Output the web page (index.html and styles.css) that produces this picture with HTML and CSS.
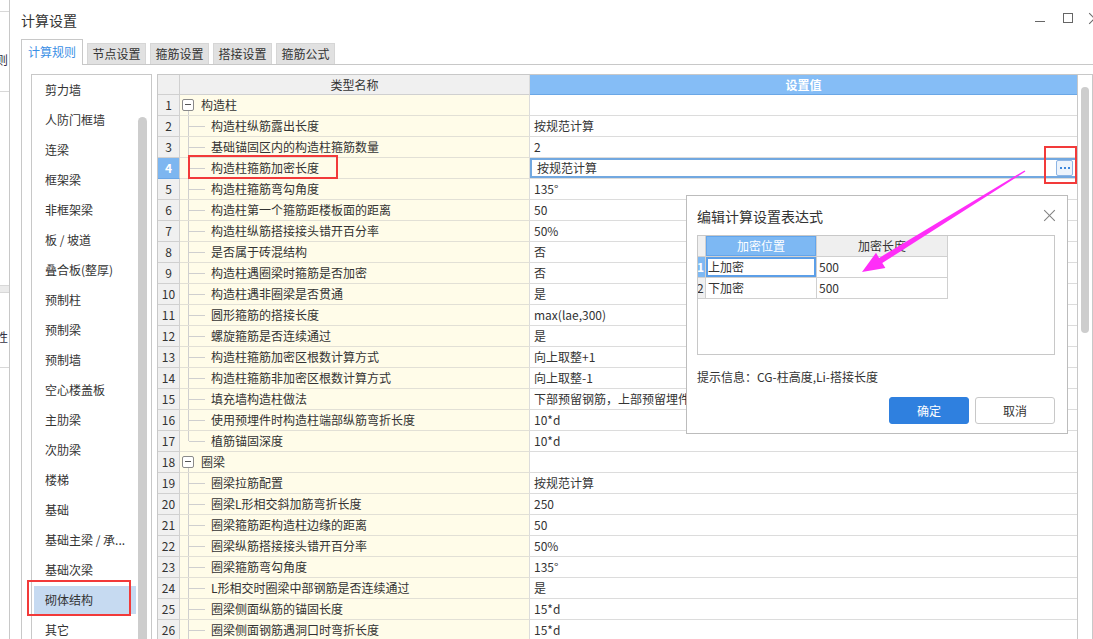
FILE: index.html
```html
<!DOCTYPE html>
<html lang="zh">
<head>
<meta charset="utf-8">
<title>计算设置</title>
<link rel="stylesheet" href="styles.css">
</head>
<body>
<div class="desk">
  <div class="behind">
    <div class="bk bk1"></div>
    <div class="bk bk2"><span class="clip">则</span></div>
    <div class="bk bk3"></div>
    <div class="bk bk4"></div>
    <div class="bk bk5"><span class="clip">性</span></div>
  </div>
  <div class="win">
    <div class="titlebar">
      <span class="title">计算设置</span>
      <div class="ctrls">
        <span class="ctl-min"></span>
        <span class="ctl-max"></span>
        <span class="ctl-close"></span>
      </div>
    </div>
    <div class="tabs">
      <div class="tab active">计算规则</div>
      <div class="tab">节点设置</div>
      <div class="tab">箍筋设置</div>
      <div class="tab">搭接设置</div>
      <div class="tab">箍筋公式</div>
    </div>
    <div class="pane">
      <div class="list">
        <div class="items">
          <div class="item">剪力墙</div>
          <div class="item">人防门框墙</div>
          <div class="item">连梁</div>
          <div class="item">框架梁</div>
          <div class="item">非框架梁</div>
          <div class="item">板 / 坡道</div>
          <div class="item">叠合板(整厚)</div>
          <div class="item">预制柱</div>
          <div class="item">预制梁</div>
          <div class="item">预制墙</div>
          <div class="item">空心楼盖板</div>
          <div class="item">主肋梁</div>
          <div class="item">次肋梁</div>
          <div class="item">楼梯</div>
          <div class="item">基础</div>
          <div class="item">基础主梁 / 承...</div>
          <div class="item">基础次梁</div>
          <div class="item selected">砌体结构</div>
          <div class="item">其它</div>
        </div>
        <div class="sb"><div class="sb-thumb"></div></div>
      </div>
      <div class="grid">
        <div class="tbl">
          <div class="hdr">
            <div class="c-num"></div>
            <div class="c-name">类型名称</div>
            <div class="c-val">设置值</div>
          </div>
          <div class="row"><div class="c-num">1</div><div class="c-name grp"><span class="tbox"></span>构造柱</div><div class="c-val"></div></div>
          <div class="row"><div class="c-num">2</div><div class="c-name"><span class="tree"></span>构造柱纵筋露出长度</div><div class="c-val">按规范计算</div></div>
          <div class="row"><div class="c-num">3</div><div class="c-name"><span class="tree"></span>基础锚固区内的构造柱箍筋数量</div><div class="c-val">2</div></div>
          <div class="row sel"><div class="c-num">4</div><div class="c-name"><span class="tree"></span>构造柱箍筋加密长度</div><div class="c-val"><span>按规范计算</span><span class="dots"><i></i><i></i><i></i></span></div></div>
          <div class="row"><div class="c-num">5</div><div class="c-name"><span class="tree"></span>构造柱箍筋弯勾角度</div><div class="c-val">135°</div></div>
          <div class="row"><div class="c-num">6</div><div class="c-name"><span class="tree"></span>构造柱第一个箍筋距楼板面的距离</div><div class="c-val">50</div></div>
          <div class="row"><div class="c-num">7</div><div class="c-name"><span class="tree"></span>构造柱纵筋搭接接头错开百分率</div><div class="c-val">50%</div></div>
          <div class="row"><div class="c-num">8</div><div class="c-name"><span class="tree"></span>是否属于砖混结构</div><div class="c-val">否</div></div>
          <div class="row"><div class="c-num">9</div><div class="c-name"><span class="tree"></span>构造柱遇圈梁时箍筋是否加密</div><div class="c-val">否</div></div>
          <div class="row"><div class="c-num">10</div><div class="c-name"><span class="tree"></span>构造柱遇非圈梁是否贯通</div><div class="c-val">是</div></div>
          <div class="row"><div class="c-num">11</div><div class="c-name"><span class="tree"></span>圆形箍筋的搭接长度</div><div class="c-val">max(lae,300)</div></div>
          <div class="row"><div class="c-num">12</div><div class="c-name"><span class="tree"></span>螺旋箍筋是否连续通过</div><div class="c-val">是</div></div>
          <div class="row"><div class="c-num">13</div><div class="c-name"><span class="tree"></span>构造柱箍筋加密区根数计算方式</div><div class="c-val">向上取整+1</div></div>
          <div class="row"><div class="c-num">14</div><div class="c-name"><span class="tree"></span>构造柱箍筋非加密区根数计算方式</div><div class="c-val">向上取整-1</div></div>
          <div class="row"><div class="c-num">15</div><div class="c-name"><span class="tree"></span>填充墙构造柱做法</div><div class="c-val">下部预留钢筋，上部预留埋件</div></div>
          <div class="row"><div class="c-num">16</div><div class="c-name"><span class="tree"></span>使用预埋件时构造柱端部纵筋弯折长度</div><div class="c-val">10*d</div></div>
          <div class="row"><div class="c-num">17</div><div class="c-name"><span class="tree last"></span>植筋锚固深度</div><div class="c-val">10*d</div></div>
          <div class="row"><div class="c-num">18</div><div class="c-name grp"><span class="tbox"></span>圈梁</div><div class="c-val"></div></div>
          <div class="row"><div class="c-num">19</div><div class="c-name"><span class="tree"></span>圈梁拉筋配置</div><div class="c-val">按规范计算</div></div>
          <div class="row"><div class="c-num">20</div><div class="c-name"><span class="tree"></span>圈梁L形相交斜加筋弯折长度</div><div class="c-val">250</div></div>
          <div class="row"><div class="c-num">21</div><div class="c-name"><span class="tree"></span>圈梁箍筋距构造柱边缘的距离</div><div class="c-val">50</div></div>
          <div class="row"><div class="c-num">22</div><div class="c-name"><span class="tree"></span>圈梁纵筋搭接接头错开百分率</div><div class="c-val">50%</div></div>
          <div class="row"><div class="c-num">23</div><div class="c-name"><span class="tree"></span>圈梁箍筋弯勾角度</div><div class="c-val">135°</div></div>
          <div class="row"><div class="c-num">24</div><div class="c-name"><span class="tree"></span>L形相交时圈梁中部钢筋是否连续通过</div><div class="c-val">是</div></div>
          <div class="row"><div class="c-num">25</div><div class="c-name"><span class="tree"></span>圈梁侧面纵筋的锚固长度</div><div class="c-val">15*d</div></div>
          <div class="row"><div class="c-num">26</div><div class="c-name"><span class="tree"></span>圈梁侧面钢筋遇洞口时弯折长度</div><div class="c-val">15*d</div></div>
        </div>
        <div class="vs"><div class="vs-thumb"></div></div>
      </div>
    </div>
  </div>
</div>

<div class="dlg">
  <div class="dlg-head"><span>编辑计算设置表达式</span><span class="dlg-x"></span></div>
  <div class="mini">
    <div class="m-row m-hdr"><div class="m-num"></div><div class="m-c1 m-act">加密位置</div><div class="m-c2">加密长度</div></div>
    <div class="m-row"><div class="m-num m-numsel">1</div><div class="m-c1 m-sel">上加密</div><div class="m-c2">500</div></div>
    <div class="m-row"><div class="m-num">2</div><div class="m-c1">下加密</div><div class="m-c2">500</div></div>
  </div>
  <div class="hint">提示信息：CG-柱高度,Li-搭接长度</div>
  <div class="btns"><span class="btn pri">确定</span><span class="btn">取消</span></div>
</div>

<div class="mark mk-row"></div>
<div class="mark mk-btn"></div>
<div class="mark mk-list"></div>

<svg class="arrow" width="1093" height="639" viewBox="0 0 1093 639">
  <polygon points="1024.6,170.4 1025.4,171.6 882.3,263.0 885.4,268.0 862,272 876.0,252.8 879.1,257.9" fill="#ff2ef8"/>
</svg>
</body>
</html>
```

FILE: styles.css
```css
* { box-sizing: border-box; margin: 0; padding: 0; }
html, body { width: 1093px; height: 639px; overflow: hidden; background: #fff; }
body {
  font-family: "Noto Sans CJK SC", "Microsoft YaHei", sans-serif;
  font-size: 12px;
  color: #333;
  position: relative;
}

.desk { display: flex; height: 639px; }

/* window behind */
.behind { width: 10px; flex: none; border-right: 1px solid #c8c8c8; overflow: hidden; }
.bk { border-bottom: 1px solid #d8d8d8; white-space: nowrap; }
.bk1 { height: 12px; }
.bk2 { height: 80px; padding-top: 40px; line-height: 16px; }
.bk3 { height: 194px; }
.bk4 { height: 7px; background: #ebebeb; }
.bk5 { height: 75px; padding-top: 36px; line-height: 16px; }
.clip { display: inline-block; margin-left: -4px; color: #334; }

/* main window */
.win { flex: 1; min-width: 0; display: flex; flex-direction: column; }
.titlebar { height: 39px; flex: none; display: flex; align-items: center; padding-left: 11px; }
.title { font-size: 14px; color: #333; }
.ctrls { margin-left: auto; margin-right: -7px; display: flex; align-items: center; }
.ctl-min { width: 10px; height: 1px; background: #666; margin-top: 3px; margin-right: 18px; }
.ctl-max { width: 10px; height: 10px; border: 1px solid #666; margin-top: -3px; margin-right: 16px; }
.ctl-close { width: 11px; height: 11px; position: relative; margin-top: -2px; }
.ctl-close::before, .ctl-close::after {
  content: ""; position: absolute; left: -2px; top: 5px; width: 15px; height: 1px;
  background: #666; transform: rotate(45deg);
}
.ctl-close::after { transform: rotate(-45deg); }

.tabs { height: 25px; flex: none; display: flex; align-items: flex-end; margin-left: 11px; position: relative; z-index: 1; }
.tab {
  width: 59px; height: 21px; margin-left: 4px;
  background: #e1e1e1; border: 1px solid #d6d6d6; border-bottom: none;
  text-align: center; line-height: 20px; color: #333;
}
.tab.active {
  width: 62px; height: 26px; margin-left: 0; margin-bottom: -1px;
  background: #fff; border-color: #c8c8c8; color: #3b8fe5; line-height: 24px;
}

.pane {
  flex: 1; min-height: 0; overflow: hidden;
  margin-left: 11px; border-top: 1px solid #c8c8c8; border-left: 1px solid #c8c8c8;
  padding: 9px 0 0 9px; display: flex; align-items: flex-start; gap: 5px;
}

/* left list */
.list { width: 121px; height: 640px; flex: none; border: 1px solid #c8c8c8; display: flex; }
.items { width: 105px; flex: none; padding-left: 1px; }
.item {
  height: 30px; line-height: 28px; padding-left: 11px;
  border: 1px solid transparent; background-clip: padding-box; white-space: nowrap;
}
.item.selected { background-color: #c6daf1; }
.sb { flex: 1; }
.sb-thumb { width: 9px; height: 600px; margin: 42px 0 0 1px; border-radius: 5px; background: #cdcdcd; }

/* grid */
.grid { flex: 1; min-width: 0; height: 640px; border: 1px solid #c8c8c8; display: flex; }
.tbl { flex: 1; min-width: 0; }
.vs { width: 15px; flex: none; border-left: 1px solid #c8c8c8; padding: 12px 0 0 3px; }
.vs-thumb { width: 8px; height: 246px; border-radius: 4px; background: #cdcdcd; }

.hdr, .row { display: flex; }
.hdr { height: 20px; }
.row { height: 21px; }

.c-num {
  width: 22px; flex: none; text-align: center; background: #f0f0f0;
  border-right: 1px solid #d0d0d0; border-bottom: 1px solid #d0d0d0; line-height: 20px;
}
.c-name {
  width: 350px; flex: none; background: #fffce9; position: relative;
  border-right: 1px solid #dcdcdc; border-bottom: 1px solid #e2e0d6;
  line-height: 20px; white-space: nowrap; overflow: hidden;
}
.c-val {
  flex: 1; min-width: 0; border-bottom: 1px solid #dcdcdc; padding-left: 4px;
  line-height: 20px; white-space: nowrap; overflow: hidden;
}

.hdr .c-num, .hdr .c-name { background: #f0f0f0; line-height: 19px; }
.hdr .c-name { text-align: center; border-bottom-color: #d0d0d0; }
.hdr .c-val {
  background: #85bdf6; color: #fff; text-align: center; font-weight: bold;
  line-height: 19px; border-bottom: 1px solid #6aa7e6; padding-left: 0;
}

.tree { display: inline-block; width: 31px; height: 20px; vertical-align: top; position: relative; }
.tree::before { content: ""; position: absolute; left: 8px; top: 0; bottom: -1px; width: 1px; background: #cfcfcf; }
.tree.last::before { bottom: 10px; }
.tree::after { content: ""; position: absolute; left: 9px; top: 10px; width: 16px; height: 1px; background: #cfcfcf; }

.grp { padding-left: 2px; }
.tbox {
  display: inline-block; width: 12px; height: 12px; margin: 4px 7px 0 0; vertical-align: top;
  border: 1px solid #8a8a8a; border-radius: 2px; background: #fff; position: relative;
}
.tbox::before { content: ""; position: absolute; left: 2px; top: 4px; width: 6px; height: 1px; background: #555; }
.grp::after { content: ""; position: absolute; left: 8px; top: 16px; bottom: -1px; width: 1px; background: #cfcfcf; }

.row.sel .c-num { background: #7db6f0; color: #fff; font-weight: bold; border-bottom-color: #6aa6e6; }
.row.sel .c-val {
  display: flex; align-items: center; padding-left: 7px;
  box-shadow: inset 0 0 0 2px #72a8e0;
}
.dots {
  margin-left: auto; margin-right: 4px; width: 17px; height: 16px;
  border: 1px solid #8db5e5; border-radius: 2px; background: #edf4fc;
  display: flex; align-items: center; justify-content: center; gap: 2px;
}
.dots i { display: block; width: 2px; height: 2px; background: #3d87dc; }

/* dialog */
.dlg {
  position: absolute; left: 686px; top: 195px; width: 382px; height: 239px;
  border: 1px solid #bcbcbc; background: #fff; padding: 0 12px 0 10px;
  display: flex; flex-direction: column;
}
.dlg-head { height: 39px; flex: none; display: flex; align-items: center; justify-content: space-between; font-size: 14px; color: #333; }
.dlg-x { width: 11px; height: 11px; position: relative; }
.dlg-x::before, .dlg-x::after {
  content: ""; position: absolute; left: -2px; top: 5px; width: 15px; height: 1px;
  background: #808080; transform: rotate(45deg);
}
.dlg-x::after { transform: rotate(-45deg); }

.mini { width: 358px; height: 120px; flex: none; border: 1px solid #c8c8c8; }
.m-row { display: flex; height: 21px; }
.m-num, .m-c1, .m-c2 { border-right: 1px solid #d0d0d0; border-bottom: 1px solid #d0d0d0; line-height: 20px; white-space: nowrap; overflow: hidden; }
.m-num { width: 8px; flex: none; background: #f0f0f0; text-indent: -1px; }
.m-c1 { width: 111px; flex: none; padding-left: 2px; }
.m-c2 { width: 131px; flex: none; padding-left: 2px; }
.m-hdr .m-c1, .m-hdr .m-c2 { text-align: center; padding-left: 0; }
.m-hdr .m-c2 { background: #efefef; }
.m-act { background: #7db8f3; color: #fff; box-shadow: inset 0 0 0 1px #62a5ec; }
.m-numsel { background: #7db8f3; color: #fff; font-weight: bold; }
.m-sel { box-shadow: inset 0 0 0 2px #5c9fe8; }

.hint { margin-top: 12px; line-height: 20px; flex: none; }
.btns { margin-top: 10px; display: flex; justify-content: flex-end; gap: 6px; flex: none; }
.btn {
  width: 80px; height: 27px; line-height: 25px; text-align: center;
  border: 1px solid #c8c8c8; border-radius: 3px; background: #fff; color: #333;
}
.btn.pri { background: #2f80df; border-color: #2f80df; color: #fff; }

/* annotations */
.mark { position: absolute; border: 2px solid #f23a3a; }
.mk-row { left: 188px; top: 155px; width: 150px; height: 24px; }
.mk-btn { left: 1044px; top: 146px; width: 33px; height: 38px; }
.mk-list { left: 27px; top: 580px; width: 104px; height: 36px; }

.arrow { position: absolute; left: 0; top: 0; pointer-events: none; }
```
